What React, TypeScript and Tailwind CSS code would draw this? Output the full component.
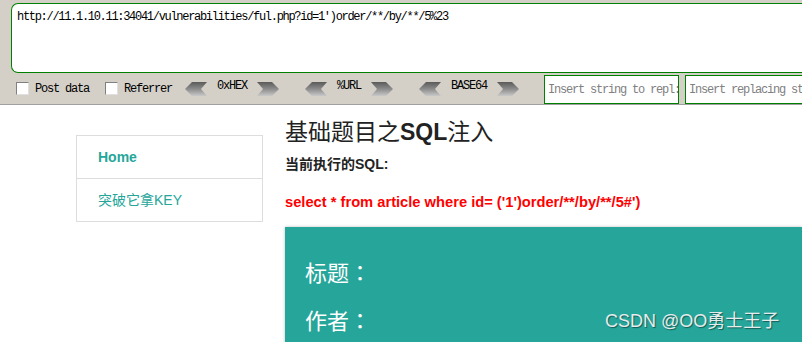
import React from 'react'

const mono = { fontFamily: '"Liberation Mono", "DejaVu Sans Mono", monospace' }

function Arrow({ dir }: { dir: 'left' | 'right' }) {
  const pts = dir === 'left' ? '0,7 7,0 22,0 16,7 22,14 7,14' : '0,0 15,0 22,7 15,14 0,14 6,7'
  const id = `g-${dir}`
  return (
    <svg width="22" height="14" viewBox="0 0 22 14" className="shrink-0">
      <defs>
        <linearGradient id={id} x1="0" y1="0" x2="0" y2="1">
          <stop offset="0" stopColor="#5a5a5a" />
          <stop offset="0.5" stopColor="#8c8c8c" />
          <stop offset="1" stopColor="#c8c8c8" />
        </linearGradient>
      </defs>
      <polygon points={pts} fill={`url(#${id})`} />
    </svg>
  )
}

function Coder({ label }: { label: string }) {
  return (
    <div className="flex items-center">
      <Arrow dir="left" />
      <span className="px-[10px] whitespace-nowrap text-[12px] tracking-[-1.2px] -mt-[5px] text-black" style={mono}>{label}</span>
      <Arrow dir="right" />
    </div>
  )
}

function Check({ label }: { label: string }) {
  return (
    <label className="flex items-center gap-[6px] whitespace-nowrap">
      <span className="w-[13px] h-[13px] shrink-0 bg-white border border-[#808080] border-r-[#e0e0e0] border-b-[#e0e0e0]" />
      <span className="text-[12px] text-black tracking-[-1.2px]" style={mono}>{label}</span>
    </label>
  )
}

function Toolbar() {
  return (
    <div className="bg-[#d4d0c8] border-b border-[#a0a0a0] pl-[11px] pt-[3px] h-[105px] overflow-hidden">
      <div className="h-[70px] bg-white border border-[#008000] border-r-0 rounded-l-[7px] px-[5px] pt-[6px]">
        <div className="text-[12px] text-black tracking-[-1.3px] leading-[14px] whitespace-nowrap" style={mono}>
          http://11.1.10.11:34041/vulnerabilities/ful.php?id=1')order/**/by/**/5%23
        </div>
      </div>
      <div className="flex items-center h-[31px] -ml-[11px] whitespace-nowrap">
        <div className="flex items-center pl-[16px] gap-[16px]">
          <Check label="Post data" />
          <Check label="Referrer" />
        </div>
        <div className="flex items-center gap-[26px] ml-[13px]">
          <Coder label="0xHEX" />
          <Coder label="%URL" />
          <Coder label="BASE64" />
        </div>
        <div className="flex items-center gap-[6px] ml-[25px] self-end">
          <div className="w-[135px] h-[29px] shrink-0 bg-white border border-[#008000] flex items-center pl-[3px] overflow-hidden">
            <span className="text-[12px] text-[#808080] tracking-[-1.2px]" style={mono}>Insert string to repl:</span>
          </div>
          <div className="w-[130px] h-[29px] shrink-0 bg-white border border-[#008000] border-r-0 flex items-center pl-[3px] overflow-hidden">
            <span className="text-[12px] text-[#808080] tracking-[-1.2px]" style={mono}>Insert replacing st</span>
          </div>
        </div>
      </div>
    </div>
  )
}

export default function App() {
  const font = { fontFamily: '"Liberation Sans", "Noto Sans CJK SC", sans-serif' }
  const cjk = { fontFamily: '"Noto Sans CJK SC", sans-serif' }
  const colon = { fontFamily: '"Noto Sans CJK JP", sans-serif' }
  return (
    <div className="w-[802px] h-[342px] bg-white overflow-hidden relative" style={font}>
      <Toolbar />
      <div className="flex pl-[76px] gap-[22px]">
        <nav className="w-[187px] mt-[30px] border border-[#dddddd] self-start">
          <div className="h-[43px] flex items-center pl-[21px] border-b border-[#dddddd] text-[14px] font-bold text-[#26a69a]">Home</div>
          <div className="h-[42px] flex items-center pl-[21px] text-[14px] text-[#26a69a]">突破它拿KEY</div>
        </nav>
        <main className="flex-1 pt-[12px]">
          <h1 className="text-[23px] leading-[30px] text-[#222]">基础题目之<span className="font-bold">SQL</span>注入</h1>
          <div className="mt-[7px] text-[14px] font-bold text-[#222] leading-[20px]">当前执行的SQL:</div>
          <div className="mt-[18px] text-[14.7px] font-bold text-[#ff0000] leading-[20px] whitespace-nowrap">
            select * from article where id= ('1')order/**/by/**/5#')
          </div>
          <div className="mt-[15px] bg-[#26a69a] shadow-[0_0_3px_rgba(0,0,0,0.25)] pl-[20px] pt-[29px] h-[140px] text-white text-[22px]" style={cjk}>
            <div className="leading-[30px]">标题<span style={colon}>：</span></div>
            <div className="leading-[30px] mt-[18px]">作者<span style={colon}>：</span></div>
          </div>
        </main>
      </div>
      <div className="absolute left-[605px] top-[308px] text-[18px] text-[#e4ecec] [text-shadow:1px_1px_1px_rgba(0,0,0,0.45)] whitespace-nowrap">
        CSDN @OO勇士王子
      </div>
    </div>
  )
}
